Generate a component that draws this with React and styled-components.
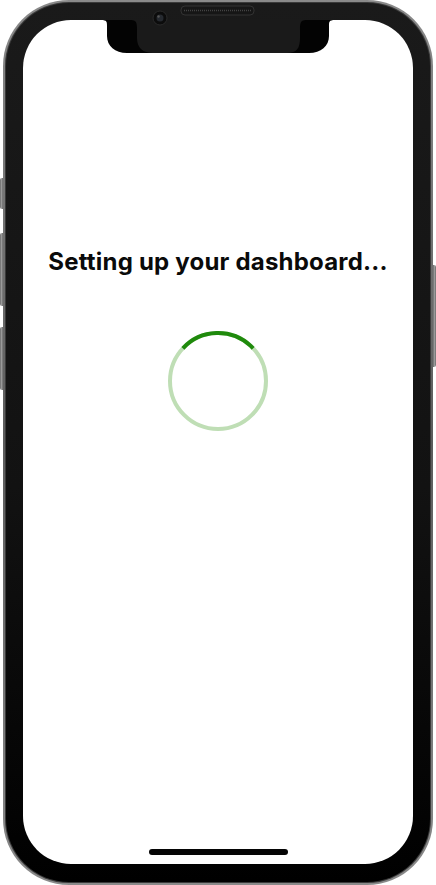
import styled, { createGlobalStyle } from 'styled-components';

const GlobalStyle = createGlobalStyle`
    html, body {
        margin: 0;
        padding: 0;
        background: #fff;
    }
    body {
        font-family: Inter, "Liberation Sans", sans-serif;
    }
`;

const Page = styled.div`
    width: 436px;
    height: 885px;
    display: flex;
    justify-content: center;
    overflow: hidden;
`;

const Device = styled.div`
    position: relative;
    box-sizing: border-box;
    width: 430px;
    height: 885px;
    border-radius: 66px;
    padding: 2px;
    background: linear-gradient(180deg, #8a8a8a 0%, #5c5c5c 50%, #8a8a8a 100%);
`;

const Bezel = styled.div`
    box-sizing: border-box;
    height: 100%;
    border-radius: 64px;
    padding: 1px;
    background: #3a3a3a;
`;

const BezelInner = styled.div`
    box-sizing: border-box;
    height: 100%;
    border-radius: 63px;
    padding: 17px 17px 18px;
    background: linear-gradient(180deg, #1a1a1a 0%, #121212 55%, #000 100%);
`;

const SideButton = styled.div`
    position: absolute;
    width: 3px;
    top: ${(p) => p.top}px;
    height: ${(p) => p.h}px;
    ${(p) => (p.right ? 'right: -3px;' : 'left: -3px;')}
    background: linear-gradient(90deg, #6a6a6a, #9a9a9a, #6a6a6a);
    border-radius: ${(p) => (p.right ? '0 2px 2px 0' : '2px 0 0 2px')};
`;

const Screen = styled.div`
    position: relative;
    height: 100%;
    border-radius: 48px;
    background: #fff;
    overflow: hidden;
    display: flex;
    flex-direction: column;
    align-items: center;
    padding-top: 227px;
    padding-bottom: 9px;
    box-sizing: border-box;
`;

const Title = styled.h1`
    margin: 0;
    font-family: Inter, "Liberation Sans", sans-serif;
    font-weight: 700;
    font-size: 24px;
    line-height: 29px;
    letter-spacing: 0.2px;
    color: #0a0a0a;
    white-space: nowrap;
`;

const SpinnerWrap = styled.div`
    margin-top: 53px;
    width: 104px;
    height: 104px;
`;

const HomeIndicator = styled.div`
    margin-top: auto;
    width: 139px;
    height: 6px;
    border-radius: 3px;
    background: #050505;
`;

const NotchLayer = styled.svg`
    position: absolute;
    top: 0;
    left: 0;
    pointer-events: none;
`;

const Spinner = () => {
    const r = 48;
    const c = 2 * Math.PI * r;
    const arc = (94 / 360) * c;
    return (
        <SpinnerWrap>
            <svg width="104" height="104" viewBox="0 0 104 104">
                <circle cx="52" cy="52" r={r} fill="none" stroke="#bfdeb5" strokeWidth="4" />
                <circle
                    cx="52"
                    cy="52"
                    r={r}
                    fill="none"
                    stroke="#1f8a0c"
                    strokeWidth="4"
                    strokeDasharray={`${arc} ${c}`}
                    transform="rotate(-137 52 52)"
                />
            </svg>
        </SpinnerWrap>
    );
};

// notch, speaker and camera drawn in device coordinates (device starts at x=3)
const Notch = () => (
    <NotchLayer width="430" height="60" viewBox="0 0 430 60">
        <path
            d="M98 20 C104 20 104 22 104 26 L104 36 C104 46 112 53 124 53 L306 53 C318 53 326 46 326 36 L326 26 C326 22 326 20 332 20 Z"
            fill="#030303"
        />
        <path
            d="M128 20 C134 20 134 24 134 30 L134 38 C134 48 140 53 150 53 L284 53 C294 53 297 48 297 38 L297 30 C297 24 297 20 303 20 Z"
            fill="#1a1a1a"
        />
        <rect x="178" y="6" width="73" height="9" rx="4" fill="#161616" stroke="#3a3a3a" strokeWidth="0.8" />
        <line x1="181" y1="10.5" x2="248" y2="10.5" stroke="#444" strokeWidth="1.5" strokeDasharray="1 1" />
        <circle cx="157" cy="18" r="7" fill="#0c0c0c" stroke="#2a2a2a" strokeWidth="1" />
        <circle cx="157" cy="18" r="3.5" fill="#262a30" />
        <circle cx="155.5" cy="16.5" r="1.2" fill="#555" />
    </NotchLayer>
);

export default function App() {
    return (
        <>
            <GlobalStyle />
            <Page>
                <Device>
                    <SideButton top={178} h={31} />
                    <SideButton top={233} h={73} />
                    <SideButton top={327} h={63} />
                    <SideButton right top={265} h={102} />
                    <Bezel>
                        <BezelInner>
                            <Screen>
                                <Title>Setting up your dashboard...</Title>
                                <Spinner />
                                <HomeIndicator />
                            </Screen>
                        </BezelInner>
                    </Bezel>
                    <Notch />
                </Device>
            </Page>
        </>
    );
}
